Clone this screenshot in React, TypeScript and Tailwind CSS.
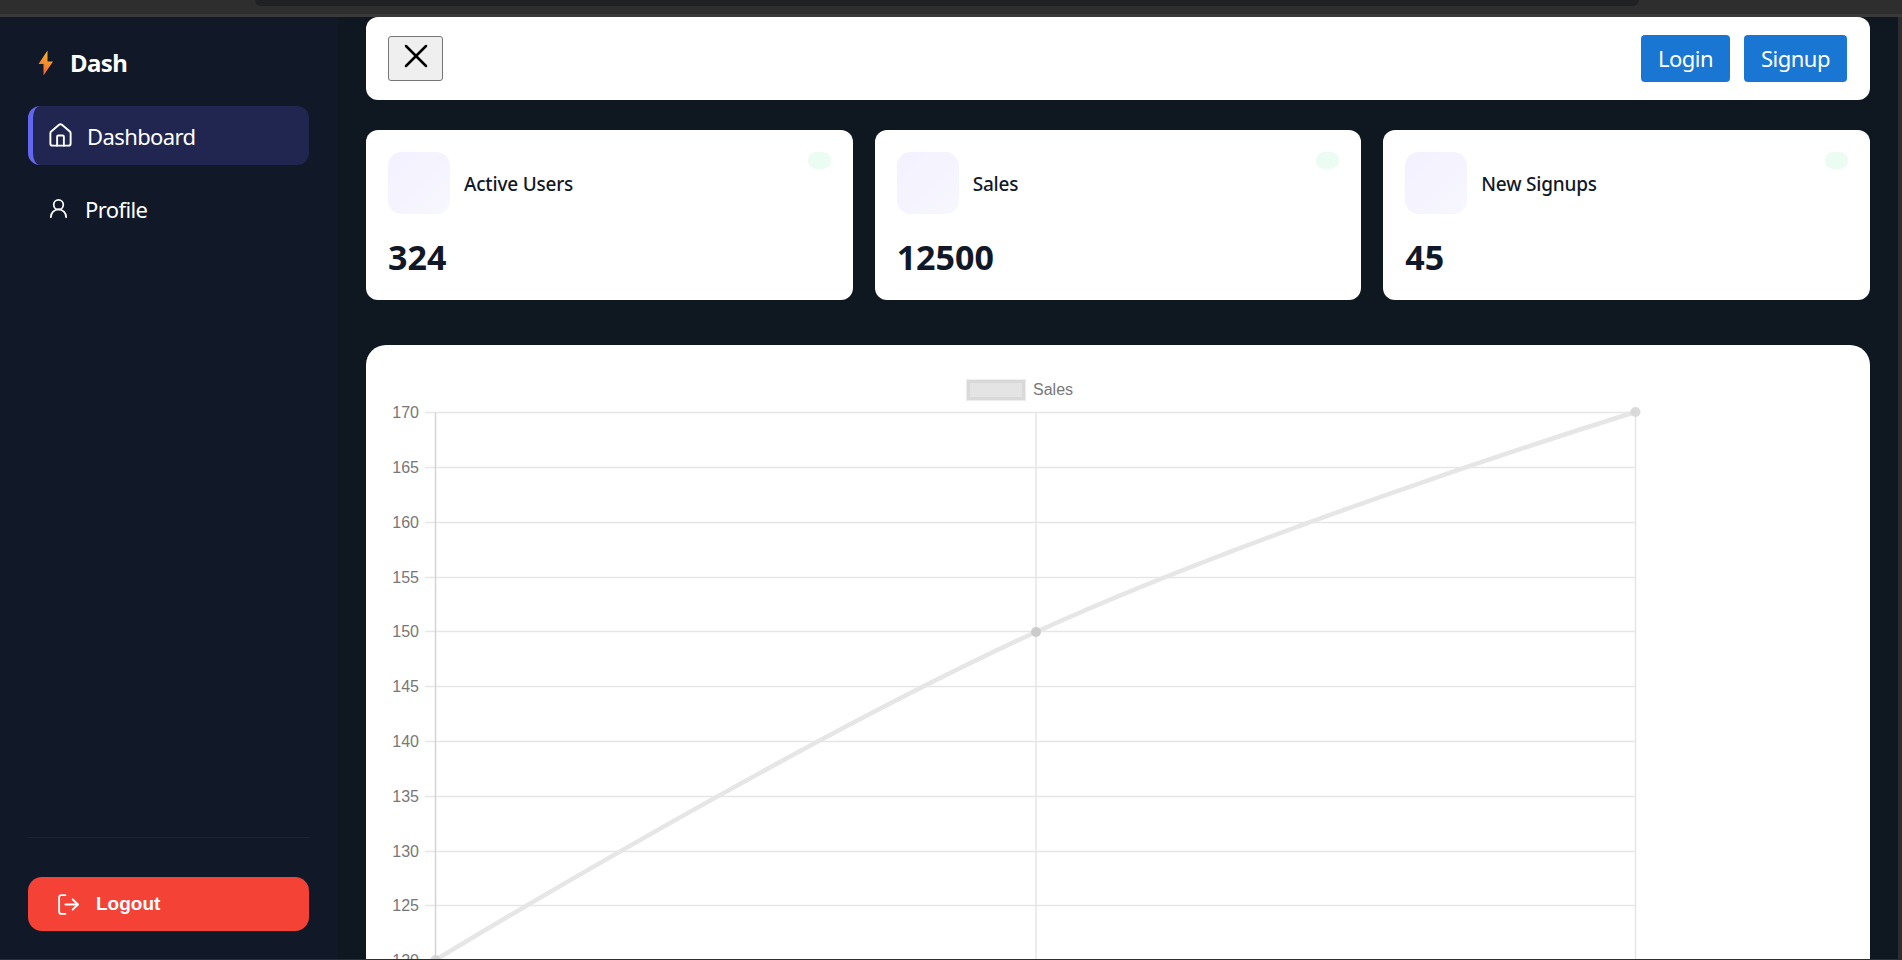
import { House, UserRound, LogOut, X } from 'lucide-react';

const ui = { fontFamily: '"Noto Sans", sans-serif' };

const stats = [
  { label: 'Active Users', value: '324' },
  { label: 'Sales', value: '12500' },
  { label: 'New Signups', value: '45' },
];

const ticks = [170, 165, 160, 155, 150, 145, 140, 135, 130, 125, 120];

function Bolt() {
  return (
    <svg width="16" height="26" viewBox="0 0 16 26" className="shrink-0">
      <defs>
        <linearGradient id="bolt" x1="0.7" y1="0" x2="0.3" y2="1">
          <stop offset="0" stopColor="#fbbf24" />
          <stop offset="1" stopColor="#ef5a3c" />
        </linearGradient>
      </defs>
      <path d="M9.5 0.5 L0.5 14 H5.5 L5.5 25.5 L15 11.5 H9.5 Z" fill="url(#bolt)" />
    </svg>
  );
}

// chart coordinates are relative to the white card (x-366, y-345)
function SalesChart() {
  const left = 69.5;
  const right = 1269.5;
  const mid = 670;
  const top = 67.5;
  const step = 54.8;

  return (
    <svg width="1504" height="640" viewBox="0 0 1504 640" className="block">
      <rect x="600.5" y="34.5" width="59" height="21" fill="none" stroke="#eeeeee" strokeWidth="1" />
      <rect x="602.5" y="36.5" width="55" height="17" fill="#e4e4e4" stroke="#d9d9d9" strokeWidth="3" />
      <text x="667" y="50" fontSize="16" fill="#777" fontFamily="Liberation Sans, sans-serif">Sales</text>

      {ticks.map((t, i) => {
        const y = Math.floor(top + 0.2 + i * step) + 0.5;
        return (
          <g key={t}>
            <line x1="59" x2={right} y1={y} y2={y} stroke="#e6e6e6" strokeWidth="1.5" />
            <text x="53" y={y + 5} textAnchor="end" fontSize="16" fill="#777" fontFamily="Liberation Sans, sans-serif">{t}</text>
          </g>
        );
      })}

      <line x1={left} x2={left} y1={top} y2="640" stroke="#d4d4d4" strokeWidth="1.5" />
      <line x1={mid} x2={mid} y1={top} y2="640" stroke="#e6e6e6" strokeWidth="1.5" />
      <line x1={right} x2={right} y1={top} y2="640" stroke="#e6e6e6" strokeWidth="1.5" />

      <path
        d="M69.5 615 C69.5 615 421.7 400.6 670 287 C901.8 181 1269.5 67 1269.5 67"
        fill="none"
        stroke="#e6e6e6"
        strokeWidth="4.5"
      />
      <circle cx={left} cy="615" r="5" fill="#d0d0d0" fillOpacity="0.8" />
      <circle cx={mid} cy="287" r="5" fill="#cbcbcb" />
      <circle cx={right} cy="67" r="5" fill="#d6d6d6" fillOpacity="0.9" />
    </svg>
  );
}

export default function App() {
  return (
    <div className="h-screen overflow-hidden flex flex-col bg-[#2e2e2e]" style={ui}>
      {/* browser chrome left in the shot */}
      <div className="h-[17px] shrink-0 bg-[#2e2e2e] border-b-[3px] border-[#3a3a3a] flex justify-center">
        <div className="w-[1384px] h-[6px] ml-[-8px] bg-[#202124] rounded-b-xl" />
      </div>

      <div className="flex-1 min-h-0 flex mr-[4px] mb-[1px]">
        <aside className="w-[338px] shrink-0 bg-[#111827] flex flex-col pl-[28px] pr-[29px] pb-[28px]">
          <div className="flex items-center gap-[16px] pl-[10px] pt-[29px] mb-[26px]">
            <Bolt />
            <span className="text-[24px] leading-[34px] font-bold text-white tracking-[-0.6px]">Dash</span>
          </div>

          <nav className="flex flex-col gap-[14px]">
            <a className="h-[59px] flex items-center gap-[13px] pl-[14px] rounded-xl bg-[#212650] border-l-[5px] border-[#6366f1] text-white text-[22px] tracking-[-0.6px]">
              <House size={27} strokeWidth={1.7} />
              <span className="mt-[2px]">Dashboard</span>
            </a>
            <a className="h-[59px] flex items-center gap-[15px] pl-[19px] text-white text-[22px] tracking-[-0.6px]">
              <UserRound size={23} strokeWidth={1.8} />
              <span className="mt-[2px]">Profile</span>
            </a>
          </nav>

          <div className="mt-auto border-t border-[#1c2433] pt-[39px]">
            <button className="w-full h-[54px] rounded-[14px] bg-[#f44336] text-white flex items-center gap-[15px] pl-[28px] font-bold text-[19px]" style={{ fontFamily: '"Liberation Sans", sans-serif' }}>
              <LogOut size={25} strokeWidth={1.8} />
              Logout
            </button>
          </div>
        </aside>

        <main className="flex-1 min-w-0 bg-[#0f1720] px-[28px] flex flex-col overflow-hidden">
          <header className="h-[83px] shrink-0 bg-white rounded-xl flex items-center justify-between pl-[22px] pr-[23px]">
            <button className="w-[55px] h-[45px] flex items-center justify-center bg-[#efefef] border border-[#767676] rounded-[3px] text-black">
              <X size={40} strokeWidth={1.5} className="shrink-0 -mt-[6px]" />
            </button>
            <div className="flex gap-[14px]">
              <button className="w-[89px] h-[47px] rounded-[4px] bg-[#1976d2] text-white text-[22px] tracking-[-0.5px]">Login</button>
              <button className="w-[103px] h-[47px] rounded-[4px] bg-[#1976d2] text-white text-[22px] tracking-[-0.5px]">Signup</button>
            </div>
          </header>

          <section className="grid grid-cols-3 gap-[22px] mt-[30px] shrink-0">
            {stats.map(s => (
              <div key={s.label} className="h-[170px] bg-white rounded-xl pt-[22px] px-[22px] pb-[23px] flex flex-col justify-between">
                <div className="flex items-start justify-between">
                  <div className="flex items-center gap-[14px]">
                    <div className="w-[62px] h-[62px] rounded-[14px] bg-gradient-to-br from-[#f3f1fe] to-[#f7f7fe]" />
                    <span className="mt-[2px] text-[19px] font-medium text-[#111827] tracking-[-0.2px]">{s.label}</span>
                  </div>
                  <div className="w-[23px] h-[17px] rounded-full bg-[#ebfcf3]" />
                </div>
                <div className="text-[34px] leading-[40px] font-bold text-[#111827]">{s.value}</div>
              </div>
            ))}
          </section>

          <section className="mt-[45px] bg-white rounded-t-[20px] flex-1 min-h-0 overflow-hidden">
            <SalesChart />
          </section>
        </main>
      </div>
    </div>
  );
}
